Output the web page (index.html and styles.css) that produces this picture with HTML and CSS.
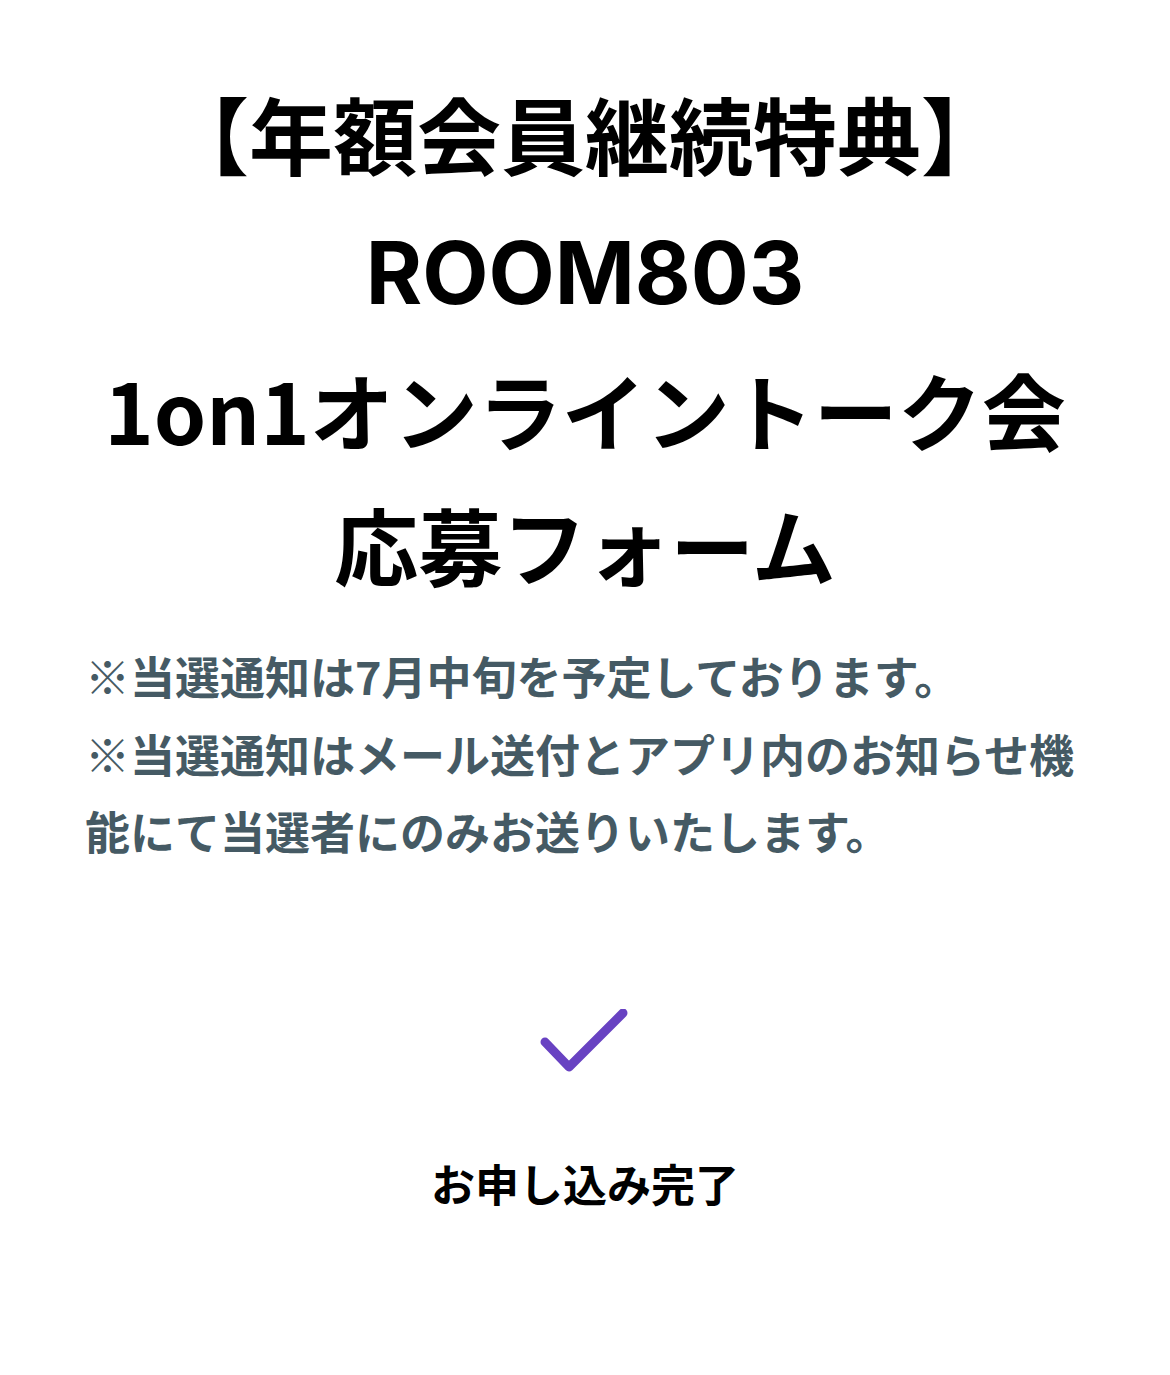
FILE: index.html
```html
<!DOCTYPE html>
<html lang="ja">
<head>
<meta charset="utf-8">
<link rel="stylesheet" href="styles.css">
</head>
<body>
<main class="page">
  <h1 class="title">【年額会員継続特典】<br><span class="latin">ROOM803</span><br>1on1オンライントーク会<br>応募フォーム</h1>
  <div class="notes">
    <p>※当選通知は7月中旬を予定しております。</p>
    <p>※当選通知はメール送付とアプリ内のお知らせ機能にて当選者にのみお送りいたします。</p>
  </div>
  <div class="done">
    <svg class="check" width="90" height="70" viewBox="0 0 90 70">
      <polyline points="5,33 29,58 83,4" fill="none" stroke="#6842c2" stroke-width="9" stroke-linecap="round" stroke-linejoin="round"/>
    </svg>
    <p class="done-text">お申し込み完了</p>
  </div>
</main>
</body>
</html>
```
FILE: styles.css
```css
html, body {
  margin: 0;
  padding: 0;
  background: #fff;
}
.page {
  font-family: "Noto Sans CJK JP", "Noto Sans", sans-serif;
  padding: 65px 85px 0;
}
.title {
  margin: 0;
  text-align: center;
  font-size: 84px;
  line-height: 135px;
  font-weight: 700;
  color: #000;
}
.latin {
  font-family: "Inter", "Noto Sans CJK JP", sans-serif;
  font-size: 86px;
  font-weight: 700;
}
.notes {
  margin-top: 26px;
  color: #455a64;
  font-size: 45px;
  line-height: 77.5px;
  font-weight: 700;
}
.notes p {
  margin: 0;
}
.done {
  display: flex;
  flex-direction: column;
  align-items: center;
  margin-top: 139px;
}
.check {
  display: block;
}
.done-text {
  margin: 74px 0 0;
  font-size: 44px;
  line-height: 60px;
  font-weight: 600;
  color: #000;
}
```
